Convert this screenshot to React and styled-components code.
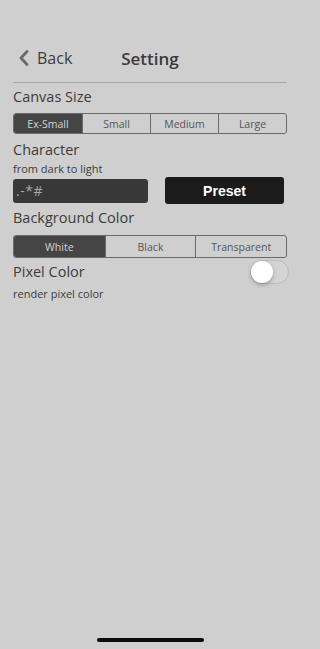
import React, { useState } from 'react';
import styled, { createGlobalStyle } from 'styled-components';

const GlobalStyle = createGlobalStyle`
  html, body {
    margin: 0;
    padding: 0;
    background: #cfcfcf;
  }
  body {
    font-family: "Open Sans", "Liberation Sans", sans-serif;
    color: #3a3a3a;
  }
`;

const Screen = styled.div`
  width: 300px;
  height: 649px;
  display: flex;
  flex-direction: column;
  background: #cfcfcf;
  position: relative;
  overflow: hidden;
`;

const Header = styled.div`
  height: 40px;
  margin: 38px 13px 0;
  display: grid;
  grid-template-columns: 1fr auto 1fr;
  align-items: center;
  border-bottom: 1px solid #a8a8a8;
  padding-bottom: 4px;
`;

const BackButton = styled.div`
  display: flex;
  align-items: center;
  gap: 8px;
  padding-left: 6px;
  font-size: 16px;
  color: #3c3c3c;
`;

const Title = styled.div`
  font-size: 17px;
  font-weight: 600;
  color: #3a3a3a;
`;

const Content = styled.div`
  padding: 0 13px;
  display: flex;
  flex-direction: column;
`;

const Label = styled.div`
  font-size: 14.5px;
  color: #3c3c3c;
  line-height: 20px;
  margin-top: ${(p) => p.$top || 0}px;
`;

const Hint = styled.div`
  font-size: 11px;
  color: #3c3c3c;
  line-height: 14px;
  margin-top: ${(p) => p.$top || 0}px;
`;

const Segmented = styled.div`
  display: grid;
  grid-template-columns: repeat(${(p) => p.$count}, 1fr);
  height: ${(p) => p.$height}px;
  box-sizing: border-box;
  border: 1px solid #6a6a6a;
  border-radius: 3px;
  overflow: hidden;
  margin-top: ${(p) => p.$top || 0}px;
`;

const Segment = styled.div`
  display: flex;
  align-items: center;
  justify-content: center;
  font-size: 10.5px;
  color: ${(p) => (p.$active ? '#d4d4d4' : '#555555')};
  background: ${(p) => (p.$active ? '#454545' : 'transparent')};
  border-left: ${(p) => (p.$first ? 'none' : '1px solid #6a6a6a')};
`;

const CharRow = styled.div`
  display: flex;
  align-items: center;
  gap: 17px;
  margin-top: 1px;
`;

const CharInput = styled.div`
  width: 135px;
  height: 24px;
  box-sizing: border-box;
  background: #383838;
  border-radius: 3px;
  color: #a8a8a8;
  font-size: 14px;
  letter-spacing: 0.5px;
  display: flex;
  align-items: center;
  padding-left: 3px;
`;

const PresetButton = styled.div`
  width: 119px;
  height: 27px;
  background: #1b1b1b;
  border-radius: 3px;
  color: #ffffff;
  font-family: "Liberation Sans", Arial, sans-serif;
  font-weight: 700;
  font-size: 14px;
  display: flex;
  align-items: center;
  justify-content: center;
`;

const PixelRow = styled.div`
  display: flex;
  align-items: center;
  justify-content: space-between;
  margin-top: 2px;
`;

const Toggle = styled.div`
  width: 39px;
  height: 24px;
  box-sizing: border-box;
  border-radius: 12px;
  border: 1px solid #bdbdbd;
  background: #d4d4d4;
  margin-right: -2px;
  position: relative;
`;

const Knob = styled.div`
  position: absolute;
  left: 0;
  top: 0;
  width: 22px;
  height: 22px;
  border-radius: 50%;
  background: #ffffff;
  box-shadow: 0 2px 4px rgba(0, 0, 0, 0.25);
`;

const HomeBar = styled.div`
  position: absolute;
  left: 97px;
  bottom: 7px;
  width: 107px;
  height: 4px;
  border-radius: 2px;
  background: #0a0a0a;
`;

function Chevron() {
  return (
    <svg width="10" height="16" viewBox="0 0 10 16">
      <path d="M8 1.5 L2 8 L8 14.5" fill="none" stroke="#6a6a6a" strokeWidth="2.8" strokeLinecap="round" strokeLinejoin="round" />
    </svg>
  );
}

export default function App() {
  const [size] = useState('Ex-Small');
  const [bg] = useState('White');
  const sizes = ['Ex-Small', 'Small', 'Medium', 'Large'];
  const bgs = ['White', 'Black', 'Transparent'];

  return (
    <Screen>
      <GlobalStyle />
      <Header>
        <BackButton>
          <Chevron />
          Back
        </BackButton>
        <Title>Setting</Title>
        <div />
      </Header>
      <Content>
        <Label $top={4}>Canvas Size</Label>
        <Segmented $count={4} $height={21} $top={6}>
          {sizes.map((s, i) => (
            <Segment key={s} $active={s === size} $first={i === 0}>{s}</Segment>
          ))}
        </Segmented>
        <Label $top={6}>Character</Label>
        <Hint $top={2}>from dark to light</Hint>
        <CharRow>
          <CharInput>.-*#</CharInput>
          <PresetButton>Preset</PresetButton>
        </CharRow>
        <Label $top={4}>Background Color</Label>
        <Segmented $count={3} $height={23} $top={7}>
          {bgs.map((s, i) => (
            <Segment key={s} $active={s === bg} $first={i === 0}>{s}</Segment>
          ))}
        </Segmented>
        <PixelRow>
          <Label>Pixel Color</Label>
          <Toggle><Knob /></Toggle>
        </PixelRow>
        <Hint $top={3}>render pixel color</Hint>
      </Content>
      <HomeBar />
    </Screen>
  );
}
